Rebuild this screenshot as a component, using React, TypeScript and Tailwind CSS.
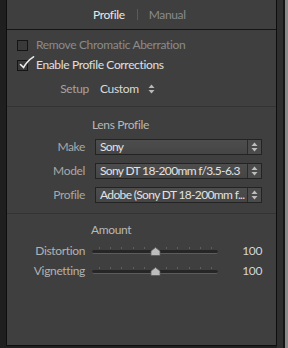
import React from "react";

const font = { fontFamily: "Lato, 'Noto Sans', sans-serif" };

const UpDown: React.FC<{ className?: string }> = ({ className }) => (
    <svg width="7" height="10" viewBox="0 0 7 10" className={className}>
        <path d="M3.5 0.5 L6.5 4 L0.5 4 Z" fill="currentColor" />
        <path d="M3.5 9.5 L6.5 6 L0.5 6 Z" fill="currentColor" />
    </svg>
);

const Select: React.FC<{ value: string }> = ({ value }) => (
    <div className="flex h-[16px] w-[167px] border border-[#232323] bg-gradient-to-b from-[#4d4d4d] to-[#454545]">
        <div className="flex-1 min-w-0 flex items-center pl-[4px] text-[12px] leading-[14px] tracking-[-0.65px] text-[#e2e2e2] whitespace-nowrap overflow-hidden">
            {value}
        </div>
        <div className="w-[14px] flex items-center justify-center border-l border-[#2a2a2a] bg-[#4b4b4b] text-[#bdbdbd]">
            <UpDown />
        </div>
    </div>
);

const Slider: React.FC<{ label: string; value: number; pos: number }> = ({ label, value, pos }) => {
    const ticks = Array.from({ length: 11 }, (_, i) => 7 + i * 11.2);
    return (
        <div className="flex h-[20px] items-center leading-[20px]">
            <div className="w-[78px] text-right text-[12px] text-[#b2b2b2]">{label}</div>
            <div className="relative ml-[7px] w-[126px] h-[20px]">
                {ticks.map((t) => (
                    <div key={t} className="absolute top-[6px] w-px h-[2px] bg-[#5e5e5e]" style={{ left: t }} />
                ))}
                <div className="absolute top-[9px] left-0 right-0 h-[4px] rounded-full bg-[#262626] border-b border-[#5c5c5c]" />
                <svg width="11" height="9" viewBox="0 0 11 9" className="absolute top-[6px]" style={{ left: pos - 5.5 }}>
                    <path d="M5.5 0.5 L10 4 L10 8.5 L1 8.5 L1 4 Z" fill="#bcbcbc" stroke="#5a5a5a" strokeWidth="0.8" />
                </svg>
            </div>
            <div className="ml-auto mr-[14px] text-[12px] text-[#d4d4d4]">{value}</div>
        </div>
    );
};

export default function App() {
    return (
        <div className="w-[288px] h-[348px] flex bg-[#1f1f1f] overflow-hidden tracking-[-0.35px]" style={font}>
            <div className="w-[6px] bg-[#1f1f1f]" />
            <div className="w-[271px] h-[346px] bg-[#3f3f3f] border-x border-b border-[#0e0e0e] flex flex-col">
                {/* Tabs */}
                <div className="h-[30px] flex items-center border-b border-[#151515] text-[12px] leading-[20px]">
                    <div className="ml-[86px] text-[#e8e8e8]">Profile</div>
                    <div className="ml-[12px] w-px h-[11px] bg-[#5a5a5a]" />
                    <div className="ml-[11px] text-[#8a8a8a]">Manual</div>
                </div>

                {/* Checkboxes */}
                <div className="pt-[5px] leading-[20px]">
                    <div className="h-[20px] flex items-center pl-[10px]">
                        <div className="w-[11px] h-[11px] border border-[#151515] bg-[#3a3a3a]" />
                        <div className="ml-[8px] text-[12px] text-[#8b8b8b]">Remove Chromatic Aberration</div>
                    </div>
                    <div className="h-[20px] flex items-center pl-[10px]">
                        <div className="relative w-[11px] h-[11px] border border-[#151515] bg-[#3a3a3a]">
                            <svg width="16" height="15" viewBox="0 0 16 15" className="absolute left-[1px] top-[-5px]">
                                <path d="M1.5 8.5 L4.5 11.5 Q8 5 14.5 0.8" fill="none" stroke="#ececec" strokeWidth="1.6" strokeLinecap="round" />
                            </svg>
                        </div>
                        <div className="ml-[8px] text-[12px] text-[#e0e0e0]">Enable Profile Corrections</div>
                    </div>
                </div>

                {/* Setup */}
                <div className="mt-[4px] h-[20px] flex items-center text-[12px] leading-[20px]">
                    <div className="w-[82px] text-right text-[#a4a4a4]">Setup</div>
                    <div className="ml-[11px] text-[#dadada]">Custom</div>
                    <UpDown className="ml-[9px] text-[#b8b8b8]" />
                </div>

                <div className="mt-[7px] h-px bg-[#333333]" />

                {/* Lens Profile */}
                <div className="mt-[8px] h-[20px] flex items-center pl-[85px] text-[12px] leading-[20px] text-[#b8b8b8]">Lens Profile</div>
                <div className="mt-[4px] flex flex-col gap-[8px]">
                    {[
                        ["Make", "Sony"],
                        ["Model", "Sony DT 18-200mm f/3.5-6.3"],
                        ["Profile", "Adobe (Sony DT 18-200mm f..."],
                    ].map(([label, value]) => (
                        <div key={label} className="flex items-center h-[16px]">
                            <div className="w-[78px] text-right text-[12px] leading-[16px] text-[#a8a8a8]">{label}</div>
                            <div className="ml-[10px]">
                                <Select value={value} />
                            </div>
                        </div>
                    ))}
                </div>

                <div className="mt-[10px] h-px bg-[#333333]" />

                {/* Amount */}
                <div className="mt-[6px] h-[20px] flex items-center pl-[84px] text-[12px] leading-[20px] text-[#b8b8b8]">Amount</div>
                <div className="mt-[1px]">
                    <Slider label="Distortion" value={100} pos={63} />
                    <Slider label="Vignetting" value={100} pos={63} />
                </div>
            </div>
            <div className="w-[6px] bg-[#2e2e2e]" />
            <div className="w-[2px] bg-[#151515]" />
            <div className="flex-1 bg-[#8a8a8a]" />
        </div>
    );
}
